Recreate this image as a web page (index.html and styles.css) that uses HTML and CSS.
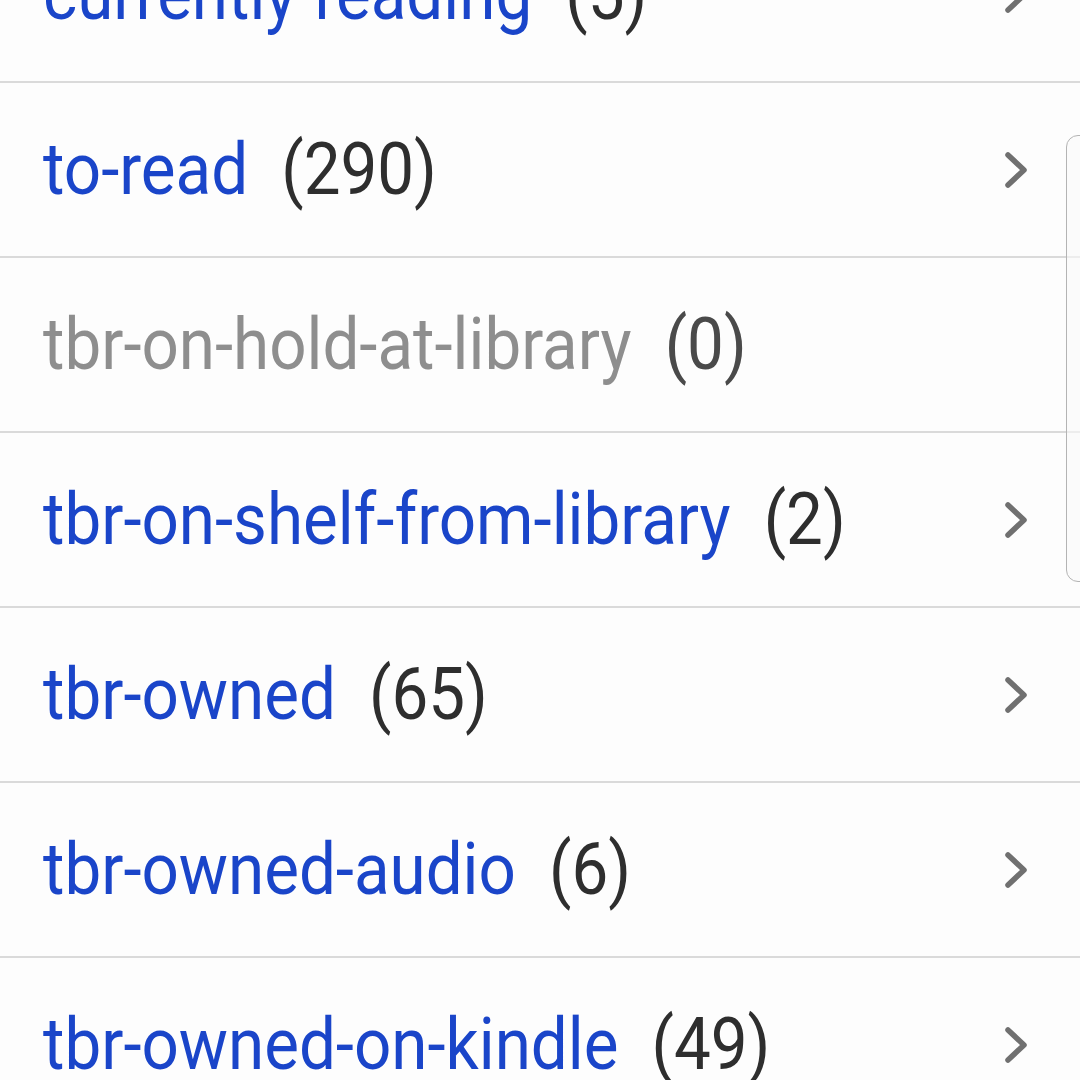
FILE: index.html
```html
<!DOCTYPE html>
<html>
<head>
<meta charset="utf-8">
<link rel="stylesheet" href="styles.css">
</head>
<body>
<div class="screen">
  <ul class="shelves">
    <li class="shelf"><span class="label"><span class="name">currently-reading</span><span class="count">(5)</span></span><svg class="chev" viewBox="0 0 24 36"><path d="M4 3 L20 18 L4 33"/></svg></li>
    <li class="shelf"><span class="label"><span class="name">to-read</span><span class="count">(290)</span></span><svg class="chev" viewBox="0 0 24 36"><path d="M4 3 L20 18 L4 33"/></svg></li>
    <li class="shelf empty"><span class="label"><span class="name">tbr-on-hold-at-library</span><span class="count">(0)</span></span></li>
    <li class="shelf"><span class="label"><span class="name">tbr-on-shelf-from-library</span><span class="count">(2)</span></span><svg class="chev" viewBox="0 0 24 36"><path d="M4 3 L20 18 L4 33"/></svg></li>
    <li class="shelf"><span class="label"><span class="name">tbr-owned</span><span class="count">(65)</span></span><svg class="chev" viewBox="0 0 24 36"><path d="M4 3 L20 18 L4 33"/></svg></li>
    <li class="shelf"><span class="label"><span class="name">tbr-owned-audio</span><span class="count">(6)</span></span><svg class="chev" viewBox="0 0 24 36"><path d="M4 3 L20 18 L4 33"/></svg></li>
    <li class="shelf"><span class="label"><span class="name">tbr-owned-on-kindle</span><span class="count">(49)</span></span><svg class="chev" viewBox="0 0 24 36"><path d="M4 3 L20 18 L4 33"/></svg></li>
  </ul>
  <div class="scroll-thumb"></div>
</div>
</body>
</html>
```

FILE: styles.css
```css
html, body {
  margin: 0;
  padding: 0;
  background: #fdfdfd;
}
.screen {
  position: relative;
  width: 1080px;
  height: 1080px;
  overflow: hidden;
  font-family: Roboto, "Noto Sans", sans-serif;
}
.shelves {
  list-style: none;
  margin: -92px 0 0 0;
  padding: 0;
}
.shelf {
  display: flex;
  align-items: center;
  height: 173px;
  border-bottom: 2px solid #dadada;
  padding: 0 52px 0 43px;
  font-size: 73px;
  line-height: 1;
}
.label {
  display: inline-block;
  white-space: nowrap;
  transform: scaleX(0.897);
  transform-origin: left center;
}
.name {
  color: #1a45c9;
}
.count {
  color: #2e2e2e;
  margin-left: 37px;
}
.empty .name {
  color: #8e8e8e;
}
.empty .count {
  color: #4a4a4a;
}
.chev {
  margin-left: auto;
  width: 24px;
  height: 36px;
}
.chev path {
  fill: none;
  stroke: #707070;
  stroke-width: 5.5;
  stroke-linecap: round;
  stroke-linejoin: round;
}
.scroll-thumb {
  position: absolute;
  left: 1066px;
  top: 135px;
  width: 40px;
  height: 445px;
  border: 1.5px solid #b4b4b4;
  border-radius: 12px;
  background: rgba(250, 250, 250, 0.6);
}
```
